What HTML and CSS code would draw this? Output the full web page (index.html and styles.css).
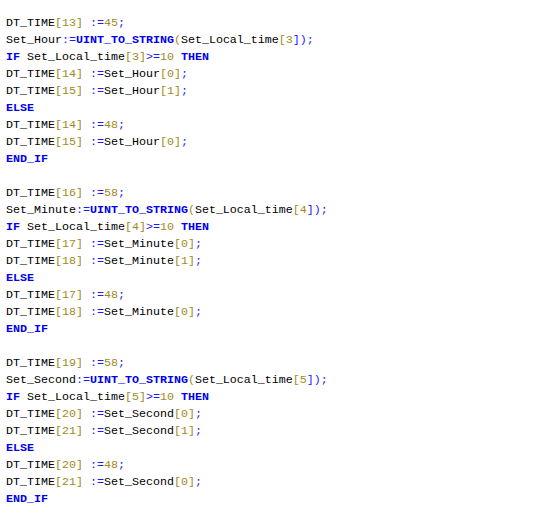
FILE: index.html
```html
<!DOCTYPE html>
<html>
<head>
<meta charset="utf-8">
<link rel="stylesheet" href="styles.css">
</head>
<body>
<pre class="code">DT_TIME<span class="n">[13]</span> <span class="o">:=</span><span class="n">45</span><span class="o">;</span>
Set_Hour<span class="o">:=</span><span class="f">UINT_TO_STRING</span><span class="n">(</span>Set_Local_time<span class="n">[3</span><span class="o">]);</span>
<span class="k">IF</span> Set_Local_time<span class="n">[3]</span><span class="o">&gt;=</span><span class="n">10</span> <span class="k">THEN</span>
DT_TIME<span class="n">[14]</span> <span class="o">:=</span>Set_Hour<span class="n">[0]</span><span class="o">;</span>
DT_TIME<span class="n">[15]</span> <span class="o">:=</span>Set_Hour<span class="n">[1]</span><span class="o">;</span>
<span class="k">ELSE</span>
DT_TIME<span class="n">[14]</span> <span class="o">:=</span><span class="n">48</span><span class="o">;</span>
DT_TIME<span class="n">[15]</span> <span class="o">:=</span>Set_Hour<span class="n">[0]</span><span class="o">;</span>
<span class="k">END_IF</span>

DT_TIME<span class="n">[16]</span> <span class="o">:=</span><span class="n">58</span><span class="o">;</span>
Set_Minute<span class="o">:=</span><span class="f">UINT_TO_STRING</span><span class="n">(</span>Set_Local_time<span class="n">[4</span><span class="o">]);</span>
<span class="k">IF</span> Set_Local_time<span class="n">[4]</span><span class="o">&gt;=</span><span class="n">10</span> <span class="k">THEN</span>
DT_TIME<span class="n">[17]</span> <span class="o">:=</span>Set_Minute<span class="n">[0]</span><span class="o">;</span>
DT_TIME<span class="n">[18]</span> <span class="o">:=</span>Set_Minute<span class="n">[1]</span><span class="o">;</span>
<span class="k">ELSE</span>
DT_TIME<span class="n">[17]</span> <span class="o">:=</span><span class="n">48</span><span class="o">;</span>
DT_TIME<span class="n">[18]</span> <span class="o">:=</span>Set_Minute<span class="n">[0]</span><span class="o">;</span>
<span class="k">END_IF</span>

DT_TIME<span class="n">[19]</span> <span class="o">:=</span><span class="n">58</span><span class="o">;</span>
Set_Second<span class="o">:=</span><span class="f">UINT_TO_STRING</span><span class="n">(</span>Set_Local_time<span class="n">[5</span><span class="o">]);</span>
<span class="k">IF</span> Set_Local_time<span class="n">[5]</span><span class="o">&gt;=</span><span class="n">10</span> <span class="k">THEN</span>
DT_TIME<span class="n">[20]</span> <span class="o">:=</span>Set_Second<span class="n">[0]</span><span class="o">;</span>
DT_TIME<span class="n">[21]</span> <span class="o">:=</span>Set_Second<span class="n">[1]</span><span class="o">;</span>
<span class="k">ELSE</span>
DT_TIME<span class="n">[20]</span> <span class="o">:=</span><span class="n">48</span><span class="o">;</span>
DT_TIME<span class="n">[21]</span> <span class="o">:=</span>Set_Second<span class="n">[0]</span><span class="o">;</span>
<span class="k">END_IF</span></pre>
</body>
</html>
```
FILE: styles.css
```css
html, body {
  margin: 0;
  background: #ffffff;
}
.code {
  margin: 0;
  padding: 15px 0 0 6px;
  font-family: "Liberation Mono", monospace;
  font-size: 11.67px;
  line-height: 17px;
  color: #000000;
}
.n {
  color: #a0891f;
}
.o {
  color: #1a1aff;
}
.f {
  color: #0000ee;
  font-weight: bold;
}
.k {
  color: #0000ee;
  font-weight: bold;
}
```
